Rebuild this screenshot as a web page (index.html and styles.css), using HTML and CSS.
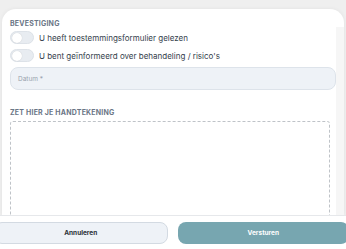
FILE: index.html
```html
<!DOCTYPE html>
<html lang="nl">
<head>
    <meta charset="UTF-8">
    <meta name="viewport" content="width=device-width, initial-scale=1.0">
    <title>Bevestiging</title>
    <link rel="stylesheet" href="styles.css">
</head>
<body>

<div class="page">
    <div class="card">
        <div class="form-scroll">
            <h2 class="section-title">Bevestiging</h2>

            <label class="toggle-row">
                <span class="toggle"><span class="knob"></span></span>
                <span class="toggle-label">U heeft toestemmingsformulier gelezen</span>
            </label>
            <label class="toggle-row">
                <span class="toggle"><span class="knob"></span></span>
                <span class="toggle-label">U bent geïnformeerd over behandeling / risico's</span>
            </label>

            <div class="field">Datum *</div>

            <h2 class="section-title signature-title">Zet hier je handtekening</h2>
            <div class="signature-pad"></div>
        </div>
        <div class="scroll-track"></div>
    </div>

    <div class="footer">
        <button class="btn btn-cancel">Annuleren</button>
        <button class="btn btn-send">Versturen</button>
    </div>
</div>

</body>
</html>
```

FILE: styles.css
```css
body {
    font-family: Inter, "Noto Sans", sans-serif;
    background-color: #efefef;
    margin: 0;
    padding: 0;
}

.page {
    height: 249px;
    display: flex;
    flex-direction: column;
    overflow: hidden;
}

.card {
    flex: 1;
    min-height: 0;
    margin: 9px 2px 0 2px;
    background-color: #fff;
    border-radius: 14px 14px 0 0;
    box-shadow: 0 0 4px rgba(0, 0, 0, 0.06);
    display: flex;
    overflow: hidden;
}

.form-scroll {
    flex: 1;
    padding: 10px 6px 0 8px;
    overflow: hidden;
}

.scroll-track {
    width: 8px;
    margin-top: 18px;
    background-color: #f6f6f6;
}

.section-title {
    margin: 0 0 2px;
    font-size: 7px;
    line-height: 10px;
    font-weight: 700;
    letter-spacing: 0.2px;
    text-transform: uppercase;
    color: #6b7686;
}

.toggle-row {
    display: flex;
    align-items: center;
    gap: 5px;
    height: 13px;
    margin-bottom: 5px;
}

.toggle {
    width: 24px;
    height: 13px;
    box-sizing: border-box;
    border-radius: 7px;
    background-color: #e8ecf1;
    border: 1px solid #dde2e8;
    display: flex;
    align-items: center;
    padding: 0 1px;
}

.knob {
    width: 10px;
    height: 10px;
    border-radius: 50%;
    background-color: #fff;
    box-shadow: 0 0 1px rgba(0, 0, 0, 0.2);
}

.toggle-label {
    font-size: 8px;
    color: #343e4b;
}

.field {
    height: 23px;
    box-sizing: border-box;
    margin: 2px -6px 0 0;
    padding-left: 7px;
    display: flex;
    align-items: center;
    font-size: 6.5px;
    color: #9aa3ae;
    background-color: #eef2f7;
    border: 1px solid #dde3ea;
    border-radius: 8px;
}

.signature-title {
    margin: 18px 0 3px;
}

.signature-pad {
    height: 120px;
    border: 1px dashed #bfc3c8;
    border-radius: 3px;
}

.footer {
    height: 34px;
    box-sizing: border-box;
    background-color: #fff;
    border-top: 1px solid #e6e8eb;
    padding-top: 6px;
    display: flex;
    gap: 10px;
    margin-left: -6px;
    width: 355px;
}

.btn {
    flex: 1;
    height: 22px;
    border-radius: 8px;
    font-family: Inter, "Noto Sans", sans-serif;
    font-size: 6.5px;
    font-weight: 700;
    cursor: pointer;
}

.btn-cancel {
    background-color: #eef2f7;
    border: 1px solid #d3dae2;
    color: #2a2f36;
}

.btn-send {
    background-color: #77a6b0;
    border: none;
    color: #fff;
}
```
